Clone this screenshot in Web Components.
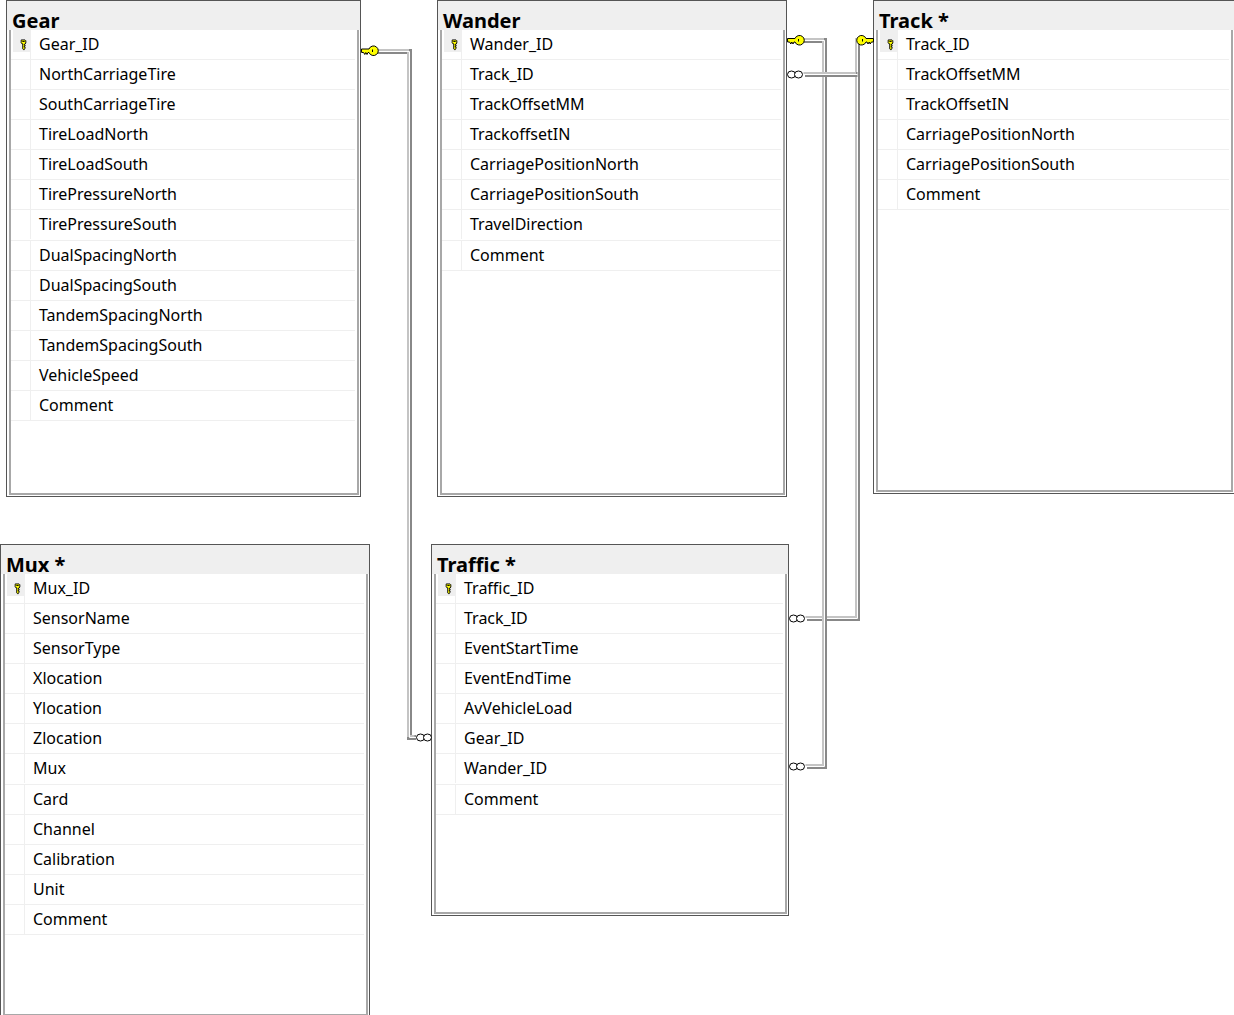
<!DOCTYPE html>
<html>
<head>
<meta charset="utf-8">
<title>Database diagram</title>
<style>
	html, body { margin: 0; height: 100%; overflow: hidden; background: #fff; }
</style>
</head>
<body>
<db-diagram>
	<db-table name="Gear" style="left:6px;top:0;width:355px;height:497px">
		<db-col key>Gear_ID</db-col>
		<db-col>NorthCarriageTire</db-col>
		<db-col>SouthCarriageTire</db-col>
		<db-col>TireLoadNorth</db-col>
		<db-col>TireLoadSouth</db-col>
		<db-col>TirePressureNorth</db-col>
		<db-col>TirePressureSouth</db-col>
		<db-col>DualSpacingNorth</db-col>
		<db-col>DualSpacingSouth</db-col>
		<db-col>TandemSpacingNorth</db-col>
		<db-col>TandemSpacingSouth</db-col>
		<db-col>VehicleSpeed</db-col>
		<db-col>Comment</db-col>
	</db-table>
	<db-table name="Wander" style="left:437px;top:0;width:350px;height:497px">
		<db-col key>Wander_ID</db-col>
		<db-col>Track_ID</db-col>
		<db-col>TrackOffsetMM</db-col>
		<db-col>TrackoffsetIN</db-col>
		<db-col>CarriagePositionNorth</db-col>
		<db-col>CarriagePositionSouth</db-col>
		<db-col>TravelDirection</db-col>
		<db-col>Comment</db-col>
	</db-table>
	<db-table name="Track *" style="left:873px;top:0;width:362px;height:494px">
		<db-col key>Track_ID</db-col>
		<db-col>TrackOffsetMM</db-col>
		<db-col>TrackOffsetIN</db-col>
		<db-col>CarriagePositionNorth</db-col>
		<db-col>CarriagePositionSouth</db-col>
		<db-col>Comment</db-col>
	</db-table>
	<db-table name="Mux *" style="left:0;top:544px;width:370px;height:474px">
		<db-col key>Mux_ID</db-col>
		<db-col>SensorName</db-col>
		<db-col>SensorType</db-col>
		<db-col>Xlocation</db-col>
		<db-col>Ylocation</db-col>
		<db-col>Zlocation</db-col>
		<db-col>Mux</db-col>
		<db-col>Card</db-col>
		<db-col>Channel</db-col>
		<db-col>Calibration</db-col>
		<db-col>Unit</db-col>
		<db-col>Comment</db-col>
	</db-table>
	<db-table name="Traffic *" style="left:431px;top:544px;width:358px;height:372px">
		<db-col key>Traffic_ID</db-col>
		<db-col>Track_ID</db-col>
		<db-col>EventStartTime</db-col>
		<db-col>EventEndTime</db-col>
		<db-col>AvVehicleLoad</db-col>
		<db-col>Gear_ID</db-col>
		<db-col>Wander_ID</db-col>
		<db-col>Comment</db-col>
	</db-table>
	<db-links></db-links>
</db-diagram>

<script>
const KEY_ICON = `
	<svg width="7" height="12" viewBox="0 0 9 14">
		<path d="M1.500 .5h5l1 1v3l-1 1.500h-1v1h1v1.500h-1v1h1v1.500l-1 2h-1l-1-1v-6.500h-1l-1-1.500v-3z" fill="#ffff00" stroke="#000" stroke-width="1.200"/>
		<path d="M3 2.500h3" stroke="#000" stroke-width="1.200"/>
	</svg>`

class DbDiagram extends HTMLElement {
	constructor() {
		super()
		this.attachShadow( { mode: 'open' } )
		this.shadowRoot.innerHTML = `
			<style>
				:host {
					display: block;
					position: relative;
					width: 1234px;
					height: 1015px;
					overflow: hidden;
				}
			</style>
			<slot></slot>
		`
	}
}

class DbTable extends HTMLElement {
	constructor() {
		super()
		this.attachShadow( { mode: 'open' } )
		this.shadowRoot.innerHTML = `
			<style>
				:host {
					display: flex;
					flex-direction: column;
					position: absolute;
					box-sizing: border-box;
					border: 1px solid #555;
					padding: 0 1px 1px 2px;
					background: #fff;
				}
				.title {
					flex: none;
					height: 29px;
					margin: 0 -1px 0 -2px;
					padding: 8px 0 0 5px;
					box-sizing: border-box;
					background: #efefef;
					color: #000;
					font: 700 20px/24px "Noto Sans", sans-serif;
					white-space: nowrap;
				}
				.body {
					flex: 1;
					display: flex;
					flex-direction: column;
					border: solid #a8a8a8;
					border-width: 0 2px 2px;
					padding-right: 2px;
					min-height: 0;
				}
			</style>
			<div class="title"></div>
			<div class="body"><slot></slot></div>
		`
		this.shadowRoot.querySelector('.title').textContent = this.getAttribute('name')
	}
}

class DbCol extends HTMLElement {
	constructor() {
		super()
		this.attachShadow( { mode: 'open' } )
		const isKey = this.hasAttribute('key')
		this.shadowRoot.innerHTML = `
			<style>
				:host {
					display: flex;
					flex: none;
					height: 30.08px;
					box-sizing: border-box;
					border-bottom: 1px solid #efefef;
					color: #000;
					font: 400 16px/28px "Noto Sans", sans-serif;
					white-space: nowrap;
				}
				.gutter {
					flex: none;
					width: 20px;
					height: 29px;
					box-sizing: border-box;
					border-right: 1px solid #efefef;
					display: flex;
					justify-content: flex-end;
				}
				.key {
					width: 17px;
					height: 22px;
					background: #efefef;
					display: flex;
					align-items: flex-end;
					justify-content: center;
					padding: 0 0 1px 3px;
					box-sizing: border-box;
				}
				.name { padding-left: 8px; }
			</style>
			<div class="gutter">${ isKey ? `<div class="key">${KEY_ICON}</div>` : '' }</div>
			<div class="name"><slot></slot></div>
		`
	}
}

// connectors: [ x, y ] points along the centre of each band, last drawn on top
const LINKS = [
	[ [ 376, 51.5 ], [ 409.5, 51.5 ], [ 409.5, 737.5 ], [ 416, 737.5 ] ],
	[ [ 864, 40.5 ], [ 857.5, 40.5 ], [ 857.5, 618.5 ], [ 807, 618.5 ] ],
	[ [ 800, 40.5 ], [ 824.5, 40.5 ], [ 824.5, 766.5 ], [ 807, 766.5 ] ],
	[ [ 805, 74.5 ], [ 857.5, 74.5 ] ],
]
const KEY_ENDS = [ [ 361, 51, 1 ], [ 787, 40.5, 1 ], [ 874, 40.5, -1 ] ]
const MANY_ENDS = [ [ 416, 737.5 ], [ 787, 74.5 ], [ 789, 618.5 ], [ 789, 766.5 ] ]

class DbLinks extends HTMLElement {
	constructor() {
		super()
		this.attachShadow( { mode: 'open' } )
		const pts = ( line, d ) => line.map( p => `${p[0] + d},${p[1] + d}` ).join(' ')
		const bands = LINKS.map( line => `
			<polyline points="${pts( line, 0 )}" stroke="#888" stroke-width="5"/>
			<polyline points="${pts( line, -1.5 )}" stroke="#c4c4c4" stroke-width="2"/>
			<polyline points="${pts( line, 0 )}" stroke="#fff" stroke-width="1"/>
		` ).join('')
		const keys = KEY_ENDS.map( ( [ x, y, dir ] ) => `
			<g transform="translate(${x} ${y}) scale(${dir} 1)">
				<path d="M.5 -2h7.500a4.800 4.800 0 1 1 0 3.500h-1l-1 2l-1.200 -2l-1 2l-1.200 -2h-2z" fill="#ffff00" stroke="#000"/>
				<path d="M11.500 -1.500v2.500" stroke="#000"/>
			</g>
		` ).join('')
		const manys = MANY_ENDS.map( ( [ x, y ] ) => `
			<g transform="translate(${x} ${y})" fill="#fff" stroke="#000">
				<ellipse cx="4.500" cy="0" rx="4" ry="3.500"/>
				<ellipse cx="11.500" cy="0" rx="4" ry="3.500"/>
			</g>
		` ).join('')
		this.shadowRoot.innerHTML = `
			<style>
				:host {
					display: block;
					position: absolute;
					left: 0;
					top: 0;
					pointer-events: none;
				}
				svg { display: block; }
			</style>
			<svg width="1234" height="1015" viewBox="0 0 1234 1015">
				<g fill="none" stroke-linejoin="miter">${bands}</g>
				${keys}
				${manys}
			</svg>
		`
	}
}

customElements.define( 'db-diagram', DbDiagram )
customElements.define( 'db-table', DbTable )
customElements.define( 'db-col', DbCol )
customElements.define( 'db-links', DbLinks )
</script>
</body>
</html>
